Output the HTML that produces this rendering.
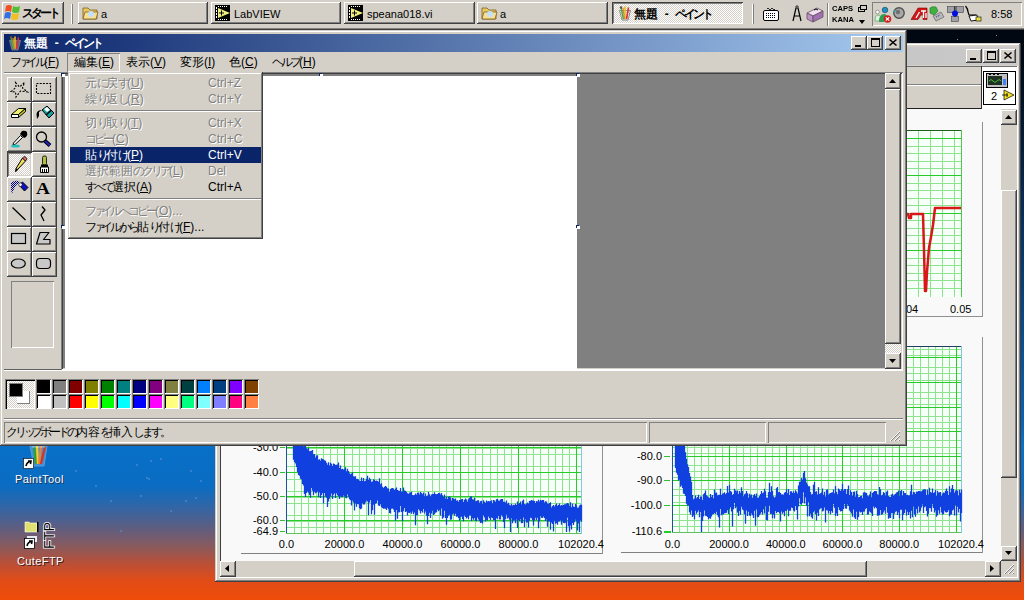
<!DOCTYPE html><html><head><meta charset="utf-8"><style>
*{margin:0;padding:0;box-sizing:border-box}
html,body{width:1024px;height:600px;overflow:hidden}
body{position:relative;font-family:"Liberation Sans",sans-serif;font-size:12px;color:#000;
background:linear-gradient(180deg,#000408 0px,#000a18 60px,#06305e 220px,#0862b4 420px,#0870c8 445px,#0a6cc2 486px,#3066a8 506px,#5a5e84 526px,#885a5e 546px,#b85038 563px,#e04c18 580px,#f04c08 600px)}
div{position:absolute}
.t{white-space:nowrap;line-height:12px}
.btn{background:#d4d0c8;box-shadow:inset -1px -1px #404040,inset 1px 1px #fff,inset -2px -2px #808080,inset 2px 2px #d4d0c8}
.win{background:#d4d0c8;box-shadow:inset -1px -1px #404040,inset 1px 1px #d4d0c8,inset -2px -2px #808080,inset 2px 2px #fff}
.sunk{box-shadow:inset 1px 1px #808080,inset -1px -1px #fff,inset 2px 2px #404040,inset -2px -2px #d4d0c8}
.thin{box-shadow:inset 1px 1px #808080,inset -1px -1px #fff}
.pressed{box-shadow:inset 1px 1px #404040,inset -1px -1px #fff,inset 2px 2px #808080,inset -2px -2px #d4d0c8}
.dith{background:conic-gradient(#fff 25%,#d4d0c8 0 50%,#fff 0 75%,#d4d0c8 0) 0 0/2px 2px}
.u{text-decoration:underline}
.jk,.jn,.js,.jp{display:inline-block;text-align:center;vertical-align:top}
.jk{width:12px}.jn{width:9px}.js{width:7px}.jp{width:8px}
svg{position:absolute;overflow:visible}
</style></head><body><div style="left:996px;top:35px;width:1px;height:1px;background:#8090a8"></div>
<div style="left:957px;top:39px;width:1px;height:1px;background:#8090a8"></div>
<div style="left:150px;top:460px;width:2px;height:2px;background:#4a88d0;opacity:.7"></div>
<div style="left:185px;top:500px;width:2px;height:2px;background:#4a88d0;opacity:.7"></div>
<div style="left:140px;top:495px;width:2px;height:2px;background:#4a88d0;opacity:.7"></div>
<div style="left:95px;top:485px;width:2px;height:2px;background:#4a88d0;opacity:.7"></div>
<div style="left:120px;top:530px;width:2px;height:2px;background:#4a88d0;opacity:.7"></div>
<div style="left:136px;top:464px;width:2px;height:2px;background:#4a88d0;opacity:.7"></div>
<div style="left:146px;top:477px;width:2px;height:2px;background:#4a88d0;opacity:.7"></div>
<div style="left:148px;top:478px;width:2px;height:2px;background:#4a88d0;opacity:.7"></div>
<div style="left:195px;top:497px;width:2px;height:2px;background:#4a88d0;opacity:.7"></div>
<div style="left:160px;top:458px;width:2px;height:2px;background:#4a88d0;opacity:.7"></div>
<div style="left:190px;top:470px;width:2px;height:2px;background:#4a88d0;opacity:.7"></div>
<div style="left:75px;top:470px;width:2px;height:2px;background:#4a88d0;opacity:.7"></div>
<div style="left:110px;top:500px;width:2px;height:2px;background:#4a88d0;opacity:.7"></div>
<div style="left:200px;top:480px;width:2px;height:2px;background:#4a88d0;opacity:.7"></div>
<div style="left:170px;top:510px;width:2px;height:2px;background:#4a88d0;opacity:.7"></div>
<svg style="left:20px;top:444px" width="32" height="26" viewBox="0 0 32 26">
<path d="M10 2 L27 2 L24 22 L14 22 Z" fill="#b0d0f0" opacity=".35" stroke="#e0f0ff" stroke-width="1"/>
<path d="M14 3 L16 20" stroke="#30a030" stroke-width="2.2"/>
<path d="M17 2 L18 20" stroke="#f0d020" stroke-width="2.2"/>
<path d="M21 2 L19 20" stroke="#f08030" stroke-width="2.2"/>
<path d="M25 3 L21 20" stroke="#e03020" stroke-width="2.2"/>
<path d="M12 3 L25 3" stroke="#fff" stroke-width=".8" opacity=".6"/>
<rect x="3.5" y="14.5" width="10" height="10" fill="#fff" stroke="#000" stroke-width=".6"/>
<path d="M6 22 Q7 18 10 17.5 M8 17 L11 17 L10.5 20" stroke="#000" stroke-width="1.6" fill="none"/>
</svg>
<div class="t" style="left:15px;top:473px;color:#fff;font-size:11px;letter-spacing:.4px;text-shadow:1px 1px #203050">PaintTool</div>
<svg style="left:22px;top:518px" width="36" height="34" viewBox="0 0 36 34">
<path d="M3 4 h4 l1 1 h7 v9 h-12 z" fill="#e0e070" stroke="#fff" stroke-width=".6"/>
<rect x="15" y="4" width="1.5" height="10" fill="#000"/>
<rect x="5" y="18" width="10" height="6" fill="#e8e8f0"/>
<rect x="2.5" y="20.5" width="10" height="10" fill="#fff" stroke="#000" stroke-width=".8"/>
<path d="M5 28 Q6 24 9 23.5 M7 23 L10 23 L9.5 26" stroke="#000" stroke-width="1.6" fill="none"/>
<text transform="translate(32 31) rotate(-90)" font-family="Liberation Sans" font-size="15" fill="#000" stroke="#fff" stroke-width="1.6" paint-order="stroke" textLength="27" lengthAdjust="spacingAndGlyphs">FTP</text>
</svg>
<div class="t" style="left:17px;top:555px;color:#fff;font-size:11px;letter-spacing:.4px;text-shadow:1px 1px #402020">CuteFTP</div>
<div class="win" style="left:215px;top:43px;width:806px;height:539px;"></div>
<div style="left:219px;top:47px;width:798px;height:18px;background:linear-gradient(90deg,#808080 0px,#c4c4c4 620px,#cacaca 800px)"></div>
<div class="btn" style="left:966px;top:49px;width:16px;height:14px;"></div>
<div class="btn" style="left:983px;top:49px;width:16px;height:14px;"></div>
<div class="btn" style="left:1000px;top:49px;width:16px;height:14px;"></div>
<div style="left:970px;top:58px;width:6px;height:2px;background:#000"></div>
<div style="left:987px;top:51px;width:9px;height:9px;border:1px solid #000;border-top-width:2px"></div>
<svg style="left:1004px;top:52px" width="8" height="7"><path d="M0.5 0.5 L7.5 6.5 M7.5 0.5 L0.5 6.5" stroke="#000" stroke-width="1.6"/></svg>
<div style="left:219px;top:65px;width:798px;height:20px;background:#d4d0c8"></div>
<div style="left:219px;top:84px;width:765px;height:1px;background:#808080"></div>
<div style="left:219px;top:85px;width:765px;height:1px;background:#fff"></div>
<div style="left:219px;top:108px;width:798px;height:1px;background:#202020"></div>
<div style="left:982px;top:67px;width:35px;height:42px;background:#fff"></div>
<div style="left:219px;top:66px;width:798px;height:1px;background:#707070"></div>
<div style="left:981px;top:66px;width:1px;height:43px;background:#303030"></div>
<div style="left:983px;top:71px;width:33px;height:34px;border:1px solid #000;background:#fff"></div>
<svg style="left:986px;top:73px" width="30" height="30" viewBox="0 0 30 30">
<rect x="0.5" y="0.5" width="21" height="14" fill="#c0c0c0" stroke="#000"/>
<rect x="2" y="3" width="14" height="9" fill="#203020"/>
<path d="M3 8 Q5 5 7 8 T11 8 T15 8" stroke="#40c040" fill="none" stroke-width="1"/>
<rect x="17" y="6" width="3" height="6" fill="#4080ff"/>
<rect x="3" y="1" width="2" height="1" fill="#000"/><rect x="7" y="1" width="2" height="1" fill="#000"/><rect x="11" y="1" width="2" height="1" fill="#000"/>
<text x="5" y="27" font-family="Liberation Sans" font-size="11" fill="#000">2</text>
<path d="M18 17 L28 22 L18 27 Z" fill="#f0e020" stroke="#000" stroke-width=".7"/>
<path d="M16 22 h6 M21 20 v4" stroke="#000" stroke-width=".8"/>
</svg>
<div style="left:220px;top:109px;width:781px;height:452px;background:#f9f9f9;box-shadow:inset 1px 0 #404040"></div>
<div style="left:1001px;top:109px;width:16px;height:452px;background:#d4d0c8"></div>
<div class="btn" style="left:1001px;top:110px;width:16px;height:15px;"></div>
<svg style="left:1005px;top:115px" width="8" height="5"><path d="M0 4 L3.5 0 L7 4 Z" fill="#000"/></svg>
<div class="btn" style="left:1001px;top:190px;width:16px;height:288px;"></div>
<div class="btn" style="left:1001px;top:546px;width:16px;height:15px;"></div>
<svg style="left:1005px;top:551px" width="8" height="5"><path d="M0 0 L7 0 L3.5 4 Z" fill="#000"/></svg>
<div style="left:220px;top:561px;width:781px;height:16px;background:#d4d0c8"></div>
<div class="btn" style="left:220px;top:561px;width:16px;height:16px;"></div>
<svg style="left:225px;top:565px" width="5" height="8"><path d="M4 0 L0 3.5 L4 7 Z" fill="#000"/></svg>
<div class="btn" style="left:354px;top:561px;width:513px;height:16px;"></div>
<div class="btn" style="left:985px;top:561px;width:16px;height:16px;"></div>
<svg style="left:990px;top:565px" width="5" height="8"><path d="M0 0 L4 3.5 L0 7 Z" fill="#000"/></svg>
<div style="left:1001px;top:561px;width:16px;height:16px;background:#d4d0c8"></div>
<div style="left:219px;top:577px;width:799px;height:1px;background:#fff"></div>
<div style="left:1017px;top:66px;width:1px;height:512px;background:#fff"></div>
<svg style="left:1003px;top:563px" width="12" height="12"><path d="M11 1 L1 11 M11 5 L5 11 M11 9 L9 11" stroke="#fff" stroke-width="1"/><path d="M11 2 L2 11 M11 6 L6 11 M11 10 L10 11" stroke="#808080" stroke-width="1"/></svg>
<div style="left:600px;top:122px;width:383px;height:195px;border-right:1px solid #909090;border-bottom:1px solid #909090"></div>
<svg style="left:700px;top:130px" width="262" height="167"><rect x="0" y="0" width="262" height="167" fill="#f6fff8"/><line x1="218.5" y1="0" x2="218.5" y2="167" stroke="#8ee48e" stroke-width="1"/><line x1="230.5" y1="0" x2="230.5" y2="167" stroke="#8ee48e" stroke-width="1"/><line x1="242.5" y1="0" x2="242.5" y2="167" stroke="#8ee48e" stroke-width="1"/><line x1="254.5" y1="0" x2="254.5" y2="167" stroke="#8ee48e" stroke-width="1"/><line x1="0" y1="16.5" x2="262" y2="16.5" stroke="#8ee48e" stroke-width="1"/><line x1="0" y1="23.5" x2="262" y2="23.5" stroke="#8ee48e" stroke-width="1"/><line x1="0" y1="31.5" x2="262" y2="31.5" stroke="#8ee48e" stroke-width="1"/><line x1="0" y1="38.5" x2="262" y2="38.5" stroke="#8ee48e" stroke-width="1"/><line x1="0" y1="53.5" x2="262" y2="53.5" stroke="#8ee48e" stroke-width="1"/><line x1="0" y1="60.5" x2="262" y2="60.5" stroke="#8ee48e" stroke-width="1"/><line x1="0" y1="68.5" x2="262" y2="68.5" stroke="#8ee48e" stroke-width="1"/><line x1="0" y1="75.5" x2="262" y2="75.5" stroke="#8ee48e" stroke-width="1"/><line x1="0" y1="90.5" x2="262" y2="90.5" stroke="#8ee48e" stroke-width="1"/><line x1="0" y1="98.5" x2="262" y2="98.5" stroke="#8ee48e" stroke-width="1"/><line x1="0" y1="105.5" x2="262" y2="105.5" stroke="#8ee48e" stroke-width="1"/><line x1="0" y1="113.5" x2="262" y2="113.5" stroke="#8ee48e" stroke-width="1"/><line x1="0" y1="128.5" x2="262" y2="128.5" stroke="#8ee48e" stroke-width="1"/><line x1="0" y1="135.5" x2="262" y2="135.5" stroke="#8ee48e" stroke-width="1"/><line x1="0" y1="143.5" x2="262" y2="143.5" stroke="#8ee48e" stroke-width="1"/><line x1="0" y1="150.5" x2="262" y2="150.5" stroke="#8ee48e" stroke-width="1"/><line x1="0" y1="158.5" x2="262" y2="158.5" stroke="#8ee48e" stroke-width="1"/><line x1="0" y1="8.5" x2="262" y2="8.5" stroke="#28cc28" stroke-width="1"/><line x1="0" y1="45.5" x2="262" y2="45.5" stroke="#28cc28" stroke-width="1"/><line x1="0" y1="83.5" x2="262" y2="83.5" stroke="#28cc28" stroke-width="1"/><line x1="0" y1="120.5" x2="262" y2="120.5" stroke="#28cc28" stroke-width="1"/></svg>
<div style="left:700px;top:130px;width:262px;height:1px;background:#206020"></div>
<div style="left:961px;top:130px;width:1px;height:167px;background:#50c850"></div>
<svg style="left:0;top:0" width="1024" height="600"><polyline points="905,214 908,214 909,218 911,218 911,214 923,214 924,250 925,291 926,291 927,272 929,248 931,237 933,225 935,208 961,208" fill="none" stroke="#d81818" stroke-width="2.5" stroke-linejoin="round"/></svg>
<div class="t" style="left:906px;top:303px;font-size:11px">04</div>
<div class="t" style="left:950px;top:303px;font-size:11px">0.05</div>
<div style="left:241px;top:553px;width:362px;height:1px;background:#808080"></div>
<div style="left:602px;top:122px;width:1px;height:432px;background:#909090"></div>
<svg style="left:286px;top:130px" width="296" height="403"><rect x="0" y="0" width="296" height="403" fill="#f6fff8"/><line x1="8.5" y1="0" x2="8.5" y2="403" stroke="#8ee48e" stroke-width="1"/><line x1="15.5" y1="0" x2="15.5" y2="403" stroke="#8ee48e" stroke-width="1"/><line x1="22.5" y1="0" x2="22.5" y2="403" stroke="#8ee48e" stroke-width="1"/><line x1="30.5" y1="0" x2="30.5" y2="403" stroke="#8ee48e" stroke-width="1"/><line x1="37.5" y1="0" x2="37.5" y2="403" stroke="#8ee48e" stroke-width="1"/><line x1="44.5" y1="0" x2="44.5" y2="403" stroke="#8ee48e" stroke-width="1"/><line x1="51.5" y1="0" x2="51.5" y2="403" stroke="#8ee48e" stroke-width="1"/><line x1="66.5" y1="0" x2="66.5" y2="403" stroke="#8ee48e" stroke-width="1"/><line x1="73.5" y1="0" x2="73.5" y2="403" stroke="#8ee48e" stroke-width="1"/><line x1="80.5" y1="0" x2="80.5" y2="403" stroke="#8ee48e" stroke-width="1"/><line x1="88.5" y1="0" x2="88.5" y2="403" stroke="#8ee48e" stroke-width="1"/><line x1="95.5" y1="0" x2="95.5" y2="403" stroke="#8ee48e" stroke-width="1"/><line x1="102.5" y1="0" x2="102.5" y2="403" stroke="#8ee48e" stroke-width="1"/><line x1="109.5" y1="0" x2="109.5" y2="403" stroke="#8ee48e" stroke-width="1"/><line x1="124.5" y1="0" x2="124.5" y2="403" stroke="#8ee48e" stroke-width="1"/><line x1="131.5" y1="0" x2="131.5" y2="403" stroke="#8ee48e" stroke-width="1"/><line x1="138.5" y1="0" x2="138.5" y2="403" stroke="#8ee48e" stroke-width="1"/><line x1="146.5" y1="0" x2="146.5" y2="403" stroke="#8ee48e" stroke-width="1"/><line x1="153.5" y1="0" x2="153.5" y2="403" stroke="#8ee48e" stroke-width="1"/><line x1="160.5" y1="0" x2="160.5" y2="403" stroke="#8ee48e" stroke-width="1"/><line x1="167.5" y1="0" x2="167.5" y2="403" stroke="#8ee48e" stroke-width="1"/><line x1="182.5" y1="0" x2="182.5" y2="403" stroke="#8ee48e" stroke-width="1"/><line x1="189.5" y1="0" x2="189.5" y2="403" stroke="#8ee48e" stroke-width="1"/><line x1="196.5" y1="0" x2="196.5" y2="403" stroke="#8ee48e" stroke-width="1"/><line x1="204.5" y1="0" x2="204.5" y2="403" stroke="#8ee48e" stroke-width="1"/><line x1="211.5" y1="0" x2="211.5" y2="403" stroke="#8ee48e" stroke-width="1"/><line x1="218.5" y1="0" x2="218.5" y2="403" stroke="#8ee48e" stroke-width="1"/><line x1="225.5" y1="0" x2="225.5" y2="403" stroke="#8ee48e" stroke-width="1"/><line x1="240.5" y1="0" x2="240.5" y2="403" stroke="#8ee48e" stroke-width="1"/><line x1="247.5" y1="0" x2="247.5" y2="403" stroke="#8ee48e" stroke-width="1"/><line x1="254.5" y1="0" x2="254.5" y2="403" stroke="#8ee48e" stroke-width="1"/><line x1="262.5" y1="0" x2="262.5" y2="403" stroke="#8ee48e" stroke-width="1"/><line x1="269.5" y1="0" x2="269.5" y2="403" stroke="#8ee48e" stroke-width="1"/><line x1="276.5" y1="0" x2="276.5" y2="403" stroke="#8ee48e" stroke-width="1"/><line x1="283.5" y1="0" x2="283.5" y2="403" stroke="#8ee48e" stroke-width="1"/><line x1="0" y1="397.5" x2="296" y2="397.5" stroke="#8ee48e" stroke-width="1"/><line x1="0" y1="391.5" x2="296" y2="391.5" stroke="#8ee48e" stroke-width="1"/><line x1="0" y1="385.5" x2="296" y2="385.5" stroke="#8ee48e" stroke-width="1"/><line x1="0" y1="373.5" x2="296" y2="373.5" stroke="#8ee48e" stroke-width="1"/><line x1="0" y1="367.5" x2="296" y2="367.5" stroke="#8ee48e" stroke-width="1"/><line x1="0" y1="361.5" x2="296" y2="361.5" stroke="#8ee48e" stroke-width="1"/><line x1="0" y1="349.5" x2="296" y2="349.5" stroke="#8ee48e" stroke-width="1"/><line x1="0" y1="342.5" x2="296" y2="342.5" stroke="#8ee48e" stroke-width="1"/><line x1="0" y1="336.5" x2="296" y2="336.5" stroke="#8ee48e" stroke-width="1"/><line x1="0" y1="324.5" x2="296" y2="324.5" stroke="#8ee48e" stroke-width="1"/><line x1="0" y1="318.5" x2="296" y2="318.5" stroke="#8ee48e" stroke-width="1"/><line x1="0" y1="312.5" x2="296" y2="312.5" stroke="#8ee48e" stroke-width="1"/><line x1="0" y1="300.5" x2="296" y2="300.5" stroke="#8ee48e" stroke-width="1"/><line x1="0" y1="294.5" x2="296" y2="294.5" stroke="#8ee48e" stroke-width="1"/><line x1="0" y1="288.5" x2="296" y2="288.5" stroke="#8ee48e" stroke-width="1"/><line x1="0" y1="276.5" x2="296" y2="276.5" stroke="#8ee48e" stroke-width="1"/><line x1="0" y1="270.5" x2="296" y2="270.5" stroke="#8ee48e" stroke-width="1"/><line x1="0" y1="264.5" x2="296" y2="264.5" stroke="#8ee48e" stroke-width="1"/><line x1="0" y1="252.5" x2="296" y2="252.5" stroke="#8ee48e" stroke-width="1"/><line x1="0" y1="246.5" x2="296" y2="246.5" stroke="#8ee48e" stroke-width="1"/><line x1="0" y1="240.5" x2="296" y2="240.5" stroke="#8ee48e" stroke-width="1"/><line x1="0" y1="228.5" x2="296" y2="228.5" stroke="#8ee48e" stroke-width="1"/><line x1="0" y1="222.5" x2="296" y2="222.5" stroke="#8ee48e" stroke-width="1"/><line x1="0" y1="215.5" x2="296" y2="215.5" stroke="#8ee48e" stroke-width="1"/><line x1="0" y1="203.5" x2="296" y2="203.5" stroke="#8ee48e" stroke-width="1"/><line x1="0" y1="197.5" x2="296" y2="197.5" stroke="#8ee48e" stroke-width="1"/><line x1="0" y1="191.5" x2="296" y2="191.5" stroke="#8ee48e" stroke-width="1"/><line x1="0" y1="179.5" x2="296" y2="179.5" stroke="#8ee48e" stroke-width="1"/><line x1="0" y1="173.5" x2="296" y2="173.5" stroke="#8ee48e" stroke-width="1"/><line x1="0" y1="167.5" x2="296" y2="167.5" stroke="#8ee48e" stroke-width="1"/><line x1="58.5" y1="0" x2="58.5" y2="403" stroke="#28cc28" stroke-width="1"/><line x1="116.5" y1="0" x2="116.5" y2="403" stroke="#28cc28" stroke-width="1"/><line x1="174.5" y1="0" x2="174.5" y2="403" stroke="#28cc28" stroke-width="1"/><line x1="232.5" y1="0" x2="232.5" y2="403" stroke="#28cc28" stroke-width="1"/><line x1="290.5" y1="0" x2="290.5" y2="403" stroke="#28cc28" stroke-width="1"/><line x1="0" y1="342.5" x2="296" y2="342.5" stroke="#28cc28" stroke-width="1"/><line x1="0" y1="366.5" x2="296" y2="366.5" stroke="#28cc28" stroke-width="1"/><line x1="0" y1="390.5" x2="296" y2="390.5" stroke="#28cc28" stroke-width="1"/><line x1="0" y1="317.5" x2="296" y2="317.5" stroke="#28cc28" stroke-width="1"/></svg>
<div style="left:286px;top:130px;width:1px;height:404px;background:#2050a0"></div>
<div style="left:286px;top:533px;width:296px;height:1px;background:#60c060"></div>
<div style="left:581px;top:130px;width:1px;height:404px;background:#80c8e0"></div>
<div class="t" style="left:230px;top:441px;width:48px;text-align:right;font-size:11px">-30.0</div>
<div style="left:280px;top:447px;width:5px;height:1px;background:#30c030"></div>
<div class="t" style="left:230px;top:466px;width:48px;text-align:right;font-size:11px">-40.0</div>
<div style="left:280px;top:472px;width:5px;height:1px;background:#30c030"></div>
<div class="t" style="left:230px;top:490px;width:48px;text-align:right;font-size:11px">-50.0</div>
<div style="left:280px;top:496px;width:5px;height:1px;background:#30c030"></div>
<div class="t" style="left:230px;top:514px;width:48px;text-align:right;font-size:11px">-60.0</div>
<div style="left:280px;top:520px;width:5px;height:1px;background:#30c030"></div>
<div class="t" style="left:230px;top:525px;width:48px;text-align:right;font-size:11px">-64.9</div>
<div style="left:280px;top:531px;width:5px;height:1px;background:#30c030"></div>
<div class="t" style="left:246.5px;top:538px;width:80px;text-align:center;font-size:11px">0.0</div>
<div class="t" style="left:304.5px;top:538px;width:80px;text-align:center;font-size:11px">20000.0</div>
<div class="t" style="left:362.5px;top:538px;width:80px;text-align:center;font-size:11px">40000.0</div>
<div class="t" style="left:420.5px;top:538px;width:80px;text-align:center;font-size:11px">60000.0</div>
<div class="t" style="left:478.5px;top:538px;width:80px;text-align:center;font-size:11px">80000.0</div>
<div class="t" style="left:541px;top:538px;width:80px;text-align:center;font-size:11px">102020.4</div>
<svg style="left:0;top:0" width="1024" height="600"><path d="M288.5 440.0V440.0M289.5 440.0V440.0M290.5 440.0V440.0M291.5 440.0V440.0M292.5 440.0V440.0M293.5 440.0V459.8M294.5 440.0V461.9M295.5 440.0V463.4M296.5 440.0V466.9M297.5 440.0V471.9M298.5 441.6V475.1M299.5 441.9V475.8M300.5 444.1V478.7M301.5 444.3V479.4M302.5 444.5V483.9M303.5 446.3V485.5M304.5 445.8V494.1M305.5 446.0V496.9M306.5 448.3V493.0M307.5 449.2V491.6M308.5 448.0V492.7M309.5 451.2V494.9M310.5 451.0V497.8M311.5 450.8V487.9M312.5 449.9V490.7M313.5 454.2V495.3M314.5 453.9V491.7M315.5 457.5V493.2M316.5 455.4V492.7M317.5 455.2V491.6M318.5 459.7V497.3M319.5 459.2V492.6M320.5 460.7V498.1M321.5 458.2V495.1M322.5 459.1V493.0M323.5 459.5V503.6M324.5 460.3V492.9M325.5 460.8V496.6M326.5 462.8V497.8M327.5 464.8V507.1M328.5 462.3V501.5M329.5 465.4V498.8M330.5 462.8V496.4M331.5 463.7V493.6M332.5 466.0V499.1M333.5 463.6V494.8M334.5 464.1V493.3M335.5 465.0V497.9M336.5 464.8V493.2M337.5 464.4V494.9M338.5 462.6V496.3M339.5 468.1V499.0M340.5 465.6V496.3M341.5 469.3V497.3M342.5 468.7V497.0M343.5 469.5V495.5M344.5 469.3V496.4M345.5 467.2V497.7M346.5 471.3V498.3M347.5 468.8V494.5M348.5 471.1V496.7M349.5 473.3V499.2M350.5 474.2V500.3M351.5 473.6V505.4M352.5 472.4V500.4M353.5 476.2V502.5M354.5 476.4V510.6M355.5 476.2V503.4M356.5 479.0V506.8M357.5 478.8V504.1M358.5 479.4V504.2M359.5 480.8V508.3M360.5 481.1V509.2M361.5 477.6V508.6M362.5 480.9V503.2M363.5 477.9V504.4M364.5 481.2V504.6M365.5 480.7V502.5M366.5 478.8V500.6M367.5 475.8V501.4M368.5 480.0V515.3M369.5 477.8V502.6M370.5 479.2V500.1M371.5 481.7V514.3M372.5 481.6V510.2M373.5 479.3V504.7M374.5 479.7V514.8M375.5 481.0V503.8M376.5 480.4V503.0M377.5 480.9V500.4M378.5 481.8V505.5M379.5 478.3V506.1M380.5 484.2V504.3M381.5 483.2V506.9M382.5 486.8V507.9M383.5 488.1V508.8M384.5 486.8V508.4M385.5 485.9V508.8M386.5 486.7V510.0M387.5 488.2V507.8M388.5 488.4V509.2M389.5 491.7V513.0M390.5 488.9V513.6M391.5 488.3V508.7M392.5 487.9V508.4M393.5 488.4V509.6M394.5 490.1V512.0M395.5 488.7V520.8M396.5 487.5V509.9M397.5 490.1V518.7M398.5 490.5V512.6M399.5 491.0V512.3M400.5 488.0V505.9M401.5 491.6V512.1M402.5 491.4V521.0M403.5 487.5V511.3M404.5 490.6V507.9M405.5 490.8V512.1M406.5 491.9V511.6M407.5 493.3V515.6M408.5 493.9V512.7M409.5 492.5V513.1M410.5 492.6V512.2M411.5 491.8V513.7M412.5 495.1V511.6M413.5 495.2V514.2M414.5 495.1V512.6M415.5 493.4V525.2M416.5 494.8V515.2M417.5 493.1V515.3M418.5 492.4V509.3M419.5 494.6V510.6M420.5 491.9V513.5M421.5 492.9V511.1M422.5 494.3V512.4M423.5 492.4V508.9M424.5 496.2V513.6M425.5 493.5V511.6M426.5 496.3V515.8M427.5 495.4V524.3M428.5 491.9V516.1M429.5 494.2V512.7M430.5 496.5V518.0M431.5 494.6V513.5M432.5 493.9V510.7M433.5 494.0V515.0M434.5 492.3V514.3M435.5 493.9V512.7M436.5 494.3V512.2M437.5 493.9V509.6M438.5 492.9V511.3M439.5 493.1V510.0M440.5 494.4V515.4M441.5 493.1V508.5M442.5 495.3V518.7M443.5 497.1V517.4M444.5 494.6V510.8M445.5 498.4V517.9M446.5 496.8V524.7M447.5 499.1V518.1M448.5 496.8V515.7M449.5 496.5V514.7M450.5 497.4V519.7M451.5 500.6V519.5M452.5 497.9V514.4M453.5 498.5V513.6M454.5 499.2V515.7M455.5 498.6V513.8M456.5 500.7V516.8M457.5 500.2V516.4M458.5 501.7V518.0M459.5 499.9V520.4M460.5 499.7V517.0M461.5 499.2V516.4M462.5 499.1V518.9M463.5 502.0V521.2M464.5 499.7V515.5M465.5 498.4V517.1M466.5 499.4V518.5M467.5 501.8V517.3M468.5 499.3V518.9M469.5 498.0V515.5M470.5 496.5V515.4M471.5 496.6V520.9M472.5 499.2V518.3M473.5 499.5V519.8M474.5 497.7V518.0M475.5 501.3V520.9M476.5 500.9V521.2M477.5 500.2V517.4M478.5 500.2V519.5M479.5 502.7V520.9M480.5 501.3V522.9M481.5 500.8V522.4M482.5 503.8V523.6M483.5 500.3V515.3M484.5 501.7V517.6M485.5 502.7V521.6M486.5 500.5V520.0M487.5 501.5V520.4M488.5 501.0V516.4M489.5 501.4V518.2M490.5 501.0V520.3M491.5 500.3V517.5M492.5 503.2V517.9M493.5 500.0V520.3M494.5 500.5V520.1M495.5 501.8V529.0M496.5 499.3V518.3M497.5 498.9V518.8M498.5 500.5V516.0M499.5 500.7V519.5M500.5 499.4V519.5M501.5 499.0V515.1M502.5 499.1V516.8M503.5 501.8V522.1M504.5 501.7V528.1M505.5 502.5V519.3M506.5 500.4V514.8M507.5 503.8V518.6M508.5 502.7V517.8M509.5 504.8V519.7M510.5 505.4V532.0M511.5 503.7V518.3M512.5 505.4V523.3M513.5 504.8V520.4M514.5 505.0V520.3M515.5 503.7V523.2M516.5 505.1V519.6M517.5 501.6V528.1M518.5 503.9V520.0M519.5 503.1V521.3M520.5 501.4V519.3M521.5 504.3V523.2M522.5 500.8V523.0M523.5 499.4V517.5M524.5 504.0V527.3M525.5 504.5V519.6M526.5 503.5V522.6M527.5 502.4V522.4M528.5 503.5V527.5M529.5 500.9V520.4M530.5 500.7V517.8M531.5 500.1V518.2M532.5 500.5V520.3M533.5 500.4V525.6M534.5 501.0V520.4M535.5 503.0V517.8M536.5 500.9V519.9M537.5 501.5V517.8M538.5 499.8V528.2M539.5 501.5V521.6M540.5 500.1V516.0M541.5 500.4V517.7M542.5 500.0V518.1M543.5 500.1V516.4M544.5 502.5V517.9M545.5 501.2V521.0M546.5 501.6V519.6M547.5 503.4V526.8M548.5 503.7V521.7M549.5 503.1V521.3M550.5 502.2V529.8M551.5 507.6V522.6M552.5 505.9V523.9M553.5 504.9V531.5M554.5 506.4V520.5M555.5 505.1V523.7M556.5 503.5V523.0M557.5 505.7V524.8M558.5 504.9V521.6M559.5 503.5V521.5M560.5 505.8V520.0M561.5 505.0V524.8M562.5 505.5V521.6M563.5 504.7V522.9M564.5 504.2V523.3M565.5 504.3V522.7M566.5 503.5V532.0M567.5 503.0V517.7M568.5 503.6V526.2M569.5 506.0V531.6M570.5 502.3V525.6M571.5 507.2V529.4M572.5 503.8V523.0M573.5 506.6V525.0M574.5 506.9V522.2M575.5 504.1V519.7M576.5 505.6V521.6M577.5 507.7V530.4M578.5 507.5V523.6M579.5 505.4V532.0M580.5 504.6V519.9M581.5 504.7V521.7" stroke="#1040e0" stroke-width="1.3" fill="none"/></svg>
<div style="left:621px;top:552px;width:362px;height:1px;background:#808080"></div>
<div style="left:982px;top:337px;width:1px;height:216px;background:#909090"></div>
<svg style="left:672px;top:346px" width="290" height="186"><rect x="0" y="0" width="290" height="186" fill="#f6fff8"/><line x1="7.5" y1="0" x2="7.5" y2="186" stroke="#8ee48e" stroke-width="1"/><line x1="15.5" y1="0" x2="15.5" y2="186" stroke="#8ee48e" stroke-width="1"/><line x1="22.5" y1="0" x2="22.5" y2="186" stroke="#8ee48e" stroke-width="1"/><line x1="29.5" y1="0" x2="29.5" y2="186" stroke="#8ee48e" stroke-width="1"/><line x1="36.5" y1="0" x2="36.5" y2="186" stroke="#8ee48e" stroke-width="1"/><line x1="43.5" y1="0" x2="43.5" y2="186" stroke="#8ee48e" stroke-width="1"/><line x1="50.5" y1="0" x2="50.5" y2="186" stroke="#8ee48e" stroke-width="1"/><line x1="64.5" y1="0" x2="64.5" y2="186" stroke="#8ee48e" stroke-width="1"/><line x1="71.5" y1="0" x2="71.5" y2="186" stroke="#8ee48e" stroke-width="1"/><line x1="78.5" y1="0" x2="78.5" y2="186" stroke="#8ee48e" stroke-width="1"/><line x1="85.5" y1="0" x2="85.5" y2="186" stroke="#8ee48e" stroke-width="1"/><line x1="93.5" y1="0" x2="93.5" y2="186" stroke="#8ee48e" stroke-width="1"/><line x1="100.5" y1="0" x2="100.5" y2="186" stroke="#8ee48e" stroke-width="1"/><line x1="107.5" y1="0" x2="107.5" y2="186" stroke="#8ee48e" stroke-width="1"/><line x1="121.5" y1="0" x2="121.5" y2="186" stroke="#8ee48e" stroke-width="1"/><line x1="128.5" y1="0" x2="128.5" y2="186" stroke="#8ee48e" stroke-width="1"/><line x1="135.5" y1="0" x2="135.5" y2="186" stroke="#8ee48e" stroke-width="1"/><line x1="142.5" y1="0" x2="142.5" y2="186" stroke="#8ee48e" stroke-width="1"/><line x1="149.5" y1="0" x2="149.5" y2="186" stroke="#8ee48e" stroke-width="1"/><line x1="156.5" y1="0" x2="156.5" y2="186" stroke="#8ee48e" stroke-width="1"/><line x1="163.5" y1="0" x2="163.5" y2="186" stroke="#8ee48e" stroke-width="1"/><line x1="178.5" y1="0" x2="178.5" y2="186" stroke="#8ee48e" stroke-width="1"/><line x1="185.5" y1="0" x2="185.5" y2="186" stroke="#8ee48e" stroke-width="1"/><line x1="192.5" y1="0" x2="192.5" y2="186" stroke="#8ee48e" stroke-width="1"/><line x1="199.5" y1="0" x2="199.5" y2="186" stroke="#8ee48e" stroke-width="1"/><line x1="206.5" y1="0" x2="206.5" y2="186" stroke="#8ee48e" stroke-width="1"/><line x1="213.5" y1="0" x2="213.5" y2="186" stroke="#8ee48e" stroke-width="1"/><line x1="220.5" y1="0" x2="220.5" y2="186" stroke="#8ee48e" stroke-width="1"/><line x1="234.5" y1="0" x2="234.5" y2="186" stroke="#8ee48e" stroke-width="1"/><line x1="241.5" y1="0" x2="241.5" y2="186" stroke="#8ee48e" stroke-width="1"/><line x1="248.5" y1="0" x2="248.5" y2="186" stroke="#8ee48e" stroke-width="1"/><line x1="256.5" y1="0" x2="256.5" y2="186" stroke="#8ee48e" stroke-width="1"/><line x1="263.5" y1="0" x2="263.5" y2="186" stroke="#8ee48e" stroke-width="1"/><line x1="270.5" y1="0" x2="270.5" y2="186" stroke="#8ee48e" stroke-width="1"/><line x1="277.5" y1="0" x2="277.5" y2="186" stroke="#8ee48e" stroke-width="1"/><line x1="0" y1="180.5" x2="290" y2="180.5" stroke="#8ee48e" stroke-width="1"/><line x1="0" y1="174.5" x2="290" y2="174.5" stroke="#8ee48e" stroke-width="1"/><line x1="0" y1="168.5" x2="290" y2="168.5" stroke="#8ee48e" stroke-width="1"/><line x1="0" y1="156.5" x2="290" y2="156.5" stroke="#8ee48e" stroke-width="1"/><line x1="0" y1="149.5" x2="290" y2="149.5" stroke="#8ee48e" stroke-width="1"/><line x1="0" y1="143.5" x2="290" y2="143.5" stroke="#8ee48e" stroke-width="1"/><line x1="0" y1="131.5" x2="290" y2="131.5" stroke="#8ee48e" stroke-width="1"/><line x1="0" y1="125.5" x2="290" y2="125.5" stroke="#8ee48e" stroke-width="1"/><line x1="0" y1="119.5" x2="290" y2="119.5" stroke="#8ee48e" stroke-width="1"/><line x1="0" y1="107.5" x2="290" y2="107.5" stroke="#8ee48e" stroke-width="1"/><line x1="0" y1="101.5" x2="290" y2="101.5" stroke="#8ee48e" stroke-width="1"/><line x1="0" y1="94.5" x2="290" y2="94.5" stroke="#8ee48e" stroke-width="1"/><line x1="0" y1="82.5" x2="290" y2="82.5" stroke="#8ee48e" stroke-width="1"/><line x1="0" y1="76.5" x2="290" y2="76.5" stroke="#8ee48e" stroke-width="1"/><line x1="0" y1="70.5" x2="290" y2="70.5" stroke="#8ee48e" stroke-width="1"/><line x1="0" y1="58.5" x2="290" y2="58.5" stroke="#8ee48e" stroke-width="1"/><line x1="0" y1="52.5" x2="290" y2="52.5" stroke="#8ee48e" stroke-width="1"/><line x1="0" y1="46.5" x2="290" y2="46.5" stroke="#8ee48e" stroke-width="1"/><line x1="0" y1="34.5" x2="290" y2="34.5" stroke="#8ee48e" stroke-width="1"/><line x1="0" y1="27.5" x2="290" y2="27.5" stroke="#8ee48e" stroke-width="1"/><line x1="0" y1="21.5" x2="290" y2="21.5" stroke="#8ee48e" stroke-width="1"/><line x1="0" y1="9.5" x2="290" y2="9.5" stroke="#8ee48e" stroke-width="1"/><line x1="0" y1="3.5" x2="290" y2="3.5" stroke="#8ee48e" stroke-width="1"/><line x1="57.5" y1="0" x2="57.5" y2="186" stroke="#28cc28" stroke-width="1"/><line x1="114.5" y1="0" x2="114.5" y2="186" stroke="#28cc28" stroke-width="1"/><line x1="170.5" y1="0" x2="170.5" y2="186" stroke="#28cc28" stroke-width="1"/><line x1="227.5" y1="0" x2="227.5" y2="186" stroke="#28cc28" stroke-width="1"/><line x1="284.5" y1="0" x2="284.5" y2="186" stroke="#28cc28" stroke-width="1"/><line x1="0" y1="110.5" x2="290" y2="110.5" stroke="#28cc28" stroke-width="1"/><line x1="0" y1="134.5" x2="290" y2="134.5" stroke="#28cc28" stroke-width="1"/><line x1="0" y1="159.5" x2="290" y2="159.5" stroke="#28cc28" stroke-width="1"/><line x1="0" y1="36.5" x2="290" y2="36.5" stroke="#28cc28" stroke-width="1"/><line x1="0" y1="11.5" x2="290" y2="11.5" stroke="#28cc28" stroke-width="1"/><line x1="0" y1="85.5" x2="290" y2="85.5" stroke="#28cc28" stroke-width="1"/><line x1="0" y1="61.5" x2="290" y2="61.5" stroke="#28cc28" stroke-width="1"/></svg>
<div style="left:672px;top:346px;width:290px;height:1px;background:#204060"></div>
<div style="left:672px;top:346px;width:1px;height:187px;background:#2050a0"></div>
<div style="left:672px;top:532px;width:290px;height:1px;background:#60c060"></div>
<div style="left:961px;top:346px;width:1px;height:187px;background:#80c8e0"></div>
<div class="t" style="left:614px;top:450px;width:48px;text-align:right;font-size:11px">-80.0</div>
<div style="left:664px;top:456px;width:6px;height:1px;background:#30c030"></div>
<div class="t" style="left:614px;top:474px;width:48px;text-align:right;font-size:11px">-90.0</div>
<div style="left:664px;top:480px;width:6px;height:1px;background:#30c030"></div>
<div class="t" style="left:614px;top:499px;width:48px;text-align:right;font-size:11px">-100.0</div>
<div style="left:664px;top:505px;width:6px;height:1px;background:#30c030"></div>
<div class="t" style="left:614px;top:525px;width:48px;text-align:right;font-size:11px">-110.6</div>
<div style="left:664px;top:531px;width:6px;height:1px;background:#30c030"></div>
<div style="left:664px;top:531px;width:7px;height:2px;background:#20d020"></div>
<div class="t" style="left:632.4px;top:538px;width:80px;text-align:center;font-size:11px">0.0</div>
<div class="t" style="left:689.1px;top:538px;width:80px;text-align:center;font-size:11px">20000.0</div>
<div class="t" style="left:745.8px;top:538px;width:80px;text-align:center;font-size:11px">40000.0</div>
<div class="t" style="left:802.5px;top:538px;width:80px;text-align:center;font-size:11px">60000.0</div>
<div class="t" style="left:859.2px;top:538px;width:80px;text-align:center;font-size:11px">80000.0</div>
<div class="t" style="left:921px;top:538px;width:80px;text-align:center;font-size:11px">102020.4</div>
<svg style="left:0;top:0" width="1024" height="600"><path d="M674.5 440.0V440.0M675.5 440.0V468.1M676.5 440.0V472.8M677.5 440.0V474.7M678.5 440.0V480.4M679.5 440.0V479.8M680.5 440.0V486.7M681.5 440.0V485.5M682.5 440.0V487.9M683.5 440.0V493.6M684.5 446.0V494.0M685.5 452.3V496.0M686.5 458.7V503.8M687.5 464.2V505.4M688.5 467.1V505.6M689.5 472.9V512.3M690.5 476.5V514.5M691.5 481.7V510.6M692.5 495.0V517.1M693.5 499.3V515.4M694.5 498.4V519.2M695.5 495.4V510.8M696.5 498.2V513.8M697.5 497.1V512.2M698.5 494.7V510.4M699.5 498.9V517.3M700.5 496.6V512.1M701.5 496.4V531.9M702.5 499.9V521.0M703.5 494.2V516.4M704.5 492.9V510.5M705.5 490.6V515.8M706.5 495.3V515.9M707.5 496.3V517.1M708.5 497.2V519.2M709.5 498.0V518.1M710.5 494.1V518.8M711.5 496.8V516.5M712.5 494.9V514.5M713.5 498.2V513.9M714.5 489.6V512.9M715.5 492.9V514.0M716.5 492.6V511.7M717.5 495.5V515.2M718.5 494.8V517.3M719.5 494.7V527.4M720.5 488.7V508.9M721.5 495.0V515.3M722.5 493.7V514.4M723.5 493.3V514.5M724.5 492.3V513.3M725.5 494.3V513.3M726.5 493.1V512.8M727.5 486.0V510.2M728.5 492.4V514.0M729.5 484.8V509.1M730.5 491.1V507.3M731.5 491.8V511.5M732.5 494.9V526.5M733.5 494.0V509.3M734.5 488.8V502.9M735.5 490.6V508.3M736.5 491.5V506.8M737.5 490.4V512.4M738.5 494.0V516.1M739.5 490.9V511.1M740.5 492.8V514.7M741.5 487.3V506.8M742.5 491.0V509.5M743.5 496.2V510.3M744.5 494.3V514.3M745.5 493.5V523.8M746.5 491.0V510.4M747.5 493.3V516.1M748.5 497.4V511.7M749.5 493.7V515.4M750.5 495.2V516.1M751.5 494.6V513.6M752.5 497.7V515.3M753.5 495.3V518.1M754.5 493.9V510.8M755.5 495.9V525.7M756.5 493.5V509.6M757.5 497.7V517.2M758.5 497.5V517.0M759.5 495.9V515.3M760.5 493.9V513.7M761.5 491.0V512.0M762.5 493.2V514.6M763.5 492.6V509.3M764.5 488.8V513.6M765.5 491.2V506.3M766.5 497.5V520.1M767.5 497.7V520.5M768.5 492.0V511.8M769.5 482.8V505.5M770.5 492.1V514.1M771.5 486.3V513.8M772.5 491.0V518.3M773.5 496.3V514.4M774.5 497.8V518.4M775.5 496.4V511.1M776.5 488.2V513.3M777.5 486.9V512.0M778.5 492.3V512.1M779.5 492.1V513.2M780.5 493.1V521.4M781.5 494.6V511.6M782.5 494.3V513.7M783.5 494.8V512.2M784.5 492.7V516.3M785.5 491.9V511.1M786.5 489.3V510.8M787.5 493.2V509.6M788.5 489.1V516.3M789.5 495.0V510.8M790.5 491.2V510.7M791.5 491.2V507.5M792.5 493.1V507.9M793.5 491.3V510.6M794.5 493.1V511.4M795.5 490.2V506.1M796.5 491.6V510.0M797.5 493.5V519.4M798.5 485.5V506.4M799.5 481.7V498.3M800.5 481.7V504.1M801.5 478.1V504.8M802.5 479.6V503.1M803.5 472.7V492.3M804.5 470.9V503.6M805.5 478.2V497.4M806.5 482.5V505.6M807.5 484.6V516.6M808.5 486.3V502.1M809.5 486.2V516.3M810.5 492.1V513.7M811.5 494.6V517.3M812.5 494.0V518.8M813.5 484.8V512.2M814.5 481.9V510.7M815.5 491.7V514.2M816.5 491.2V520.4M817.5 494.6V512.7M818.5 487.2V515.9M819.5 494.1V509.4M820.5 493.2V508.6M821.5 492.6V508.1M822.5 488.6V511.6M823.5 494.8V510.7M824.5 491.7V507.5M825.5 496.6V522.4M826.5 489.8V510.3M827.5 489.3V510.6M828.5 494.8V513.5M829.5 493.5V511.1M830.5 493.1V514.3M831.5 492.5V511.0M832.5 492.3V512.7M833.5 489.6V504.1M834.5 493.3V507.8M835.5 486.0V516.0M836.5 491.7V513.6M837.5 494.3V516.0M838.5 488.6V507.3M839.5 489.5V509.9M840.5 491.0V511.4M841.5 489.2V511.1M842.5 483.8V511.2M843.5 490.5V509.1M844.5 489.1V504.0M845.5 489.1V508.5M846.5 493.9V508.8M847.5 489.3V504.4M848.5 485.6V506.1M849.5 495.1V510.4M850.5 490.2V511.7M851.5 492.0V513.6M852.5 495.7V516.7M853.5 491.7V509.6M854.5 491.4V517.4M855.5 496.6V519.0M856.5 490.7V511.8M857.5 493.9V519.7M858.5 497.2V516.9M859.5 497.1V511.4M860.5 495.9V512.4M861.5 495.8V512.0M862.5 498.3V514.9M863.5 492.4V511.8M864.5 492.3V511.6M865.5 492.4V509.0M866.5 493.1V507.9M867.5 495.6V514.8M868.5 496.3V514.4M869.5 494.5V511.3M870.5 491.6V512.2M871.5 497.2V513.3M872.5 493.1V515.9M873.5 491.9V506.5M874.5 491.0V508.5M875.5 491.1V507.1M876.5 491.2V508.2M877.5 494.2V515.8M878.5 494.8V515.5M879.5 487.0V515.2M880.5 489.2V510.0M881.5 495.6V514.8M882.5 494.7V514.2M883.5 492.1V512.6M884.5 493.0V510.5M885.5 495.4V513.8M886.5 491.8V507.1M887.5 490.5V512.8M888.5 496.0V518.7M889.5 496.8V517.7M890.5 497.1V518.1M891.5 494.6V513.2M892.5 493.7V513.0M893.5 495.7V518.9M894.5 494.6V513.8M895.5 493.8V511.8M896.5 492.5V511.3M897.5 492.1V514.9M898.5 490.4V512.4M899.5 496.3V518.3M900.5 491.1V509.7M901.5 490.1V509.8M902.5 495.5V520.2M903.5 490.9V514.8M904.5 493.0V513.1M905.5 493.0V509.4M906.5 494.9V515.5M907.5 494.8V511.8M908.5 495.4V515.0M909.5 495.3V512.2M910.5 491.3V518.5M911.5 484.7V510.8M912.5 494.5V517.2M913.5 492.0V506.4M914.5 492.3V514.4M915.5 494.1V516.7M916.5 491.4V508.9M917.5 491.7V513.5M918.5 491.0V506.6M919.5 491.1V512.5M920.5 491.6V510.7M921.5 491.2V507.4M922.5 490.2V504.5M923.5 489.5V513.1M924.5 489.3V507.3M925.5 489.5V506.6M926.5 495.0V510.9M927.5 489.8V516.4M928.5 494.5V513.8M929.5 487.8V508.3M930.5 491.9V508.3M931.5 492.7V511.8M932.5 488.6V504.2M933.5 493.0V508.0M934.5 492.2V512.6M935.5 489.9V510.4M936.5 495.8V516.7M937.5 490.7V515.3M938.5 492.6V510.3M939.5 492.2V513.8M940.5 492.1V507.1M941.5 496.1V512.4M942.5 493.6V514.8M943.5 492.5V514.0M944.5 492.7V510.7M945.5 490.7V512.2M946.5 488.5V512.4M947.5 490.9V512.1M948.5 495.1V509.9M949.5 486.3V516.3M950.5 492.3V514.7M951.5 488.6V514.6M952.5 485.0V510.4M953.5 489.1V509.5M954.5 492.7V515.4M955.5 490.6V505.1M956.5 490.3V515.5M957.5 490.5V506.7M958.5 495.4V512.6M959.5 489.8V508.9M960.5 492.7V521.5M961.5 489.5V513.0" stroke="#1040e0" stroke-width="1.3" fill="none"/></svg>
<div class="win" style="left:0px;top:30px;width:907px;height:416px;"></div>
<div style="left:4px;top:34px;width:899px;height:18px;background:linear-gradient(90deg,#0a246a,#a6caf0)"></div>
<svg style="left:7px;top:35px" width="16" height="16" viewBox="0 0 16 16"><path d="M2.5 5.5 L13.5 5.5 L11 15 L5 15 Z" fill="#d8e0f0" fill-opacity=".35" stroke="#808080" stroke-width=".9"/><path d="M4 2 L6.5 14" stroke="#40b040" stroke-width="1.6"/><path d="M8 1.5 L8 14" stroke="#e0c020" stroke-width="1.6"/><path d="M11.5 2.5 L9.5 14" stroke="#e03030" stroke-width="1.6"/><path d="M6 3 L7.5 14" stroke="#f08030" stroke-width="1.2"/><circle cx="4" cy="2.5" r="1.3" fill="#705040"/></svg>
<div class="t" style="left:24px;top:37px;color:#fff;font-weight:bold"><span class="jk">無</span><span class="jk">題</span>&nbsp;&nbsp;-&nbsp;&nbsp;<span class="jn">ペ</span><span class="jn">イ</span><span class="jn">ン</span><span class="jn">ト</span></div>
<div class="btn" style="left:851px;top:36px;width:16px;height:14px;"></div>
<div class="btn" style="left:867px;top:36px;width:16px;height:14px;"></div>
<div class="btn" style="left:885px;top:36px;width:16px;height:14px;"></div>
<div style="left:855px;top:45px;width:6px;height:2px;background:#000"></div>
<div style="left:871px;top:38px;width:9px;height:9px;border:1px solid #000;border-top-width:2px"></div>
<svg style="left:889px;top:39px" width="8" height="7"><path d="M0.5 0.5 L7.5 6.5 M7.5 0.5 L0.5 6.5" stroke="#000" stroke-width="1.6"/></svg>
<div class="thin" style="left:67px;top:53px;width:53px;height:19px;"></div>
<div class="t" style="left:10px;top:56px;"><span class="jn">フ</span><span class="js">ァ</span><span class="jn">イ</span><span class="jn">ル</span>(<span class="u">F</span>)</div>
<div class="t" style="left:74px;top:56px;"><span class="jk">編</span><span class="jk">集</span>(<span class="u">E</span>)</div>
<div class="t" style="left:126px;top:56px;"><span class="jk">表</span><span class="jk">示</span>(<span class="u">V</span>)</div>
<div class="t" style="left:180px;top:56px;"><span class="jk">変</span><span class="jk">形</span>(<span class="u">I</span>)</div>
<div class="t" style="left:229px;top:56px;"><span class="jk">色</span>(<span class="u">C</span>)</div>
<div class="t" style="left:272px;top:56px;"><span class="jn">ヘ</span><span class="jn">ル</span><span class="jn">プ</span>(<span class="u">H</span>)</div>
<div style="left:4px;top:72px;width:57px;height:298px;background:#d4d0c8;box-shadow:inset 0 1px #808080,inset 0 2px #fff,inset 0 -1px #606060"></div>
<div class="sunk" style="left:61px;top:72px;width:842px;height:298px;background:#808080"></div>
<div style="left:65px;top:76px;width:512px;height:293px;background:#fff"></div>
<div style="left:577px;top:74px;width:3px;height:3px;background:#fff;box-shadow:-1px -1px #0a246a"></div>
<div style="left:577px;top:226px;width:3px;height:3px;background:#fff;box-shadow:-1px -1px #0a246a"></div>
<div style="left:320px;top:74px;width:3px;height:3px;background:#fff;box-shadow:-1px -1px #0a246a"></div>
<div style="left:62px;top:226px;width:3px;height:3px;background:#fff;box-shadow:-1px -1px #0a246a"></div>
<div style="left:62px;top:74px;width:3px;height:3px;background:#fff;box-shadow:-1px -1px #0a246a"></div>
<div class="dith" style="left:885px;top:73px;width:16px;height:296px;"></div>
<div class="btn" style="left:885px;top:73px;width:16px;height:16px;"></div>
<svg style="left:889px;top:79px" width="8" height="5"><path d="M0 4 L3.5 0 L7 4 Z" fill="#000"/></svg>
<div class="btn" style="left:885px;top:89px;width:16px;height:255px;"></div>
<div class="btn" style="left:885px;top:353px;width:16px;height:16px;"></div>
<svg style="left:889px;top:359px" width="8" height="5"><path d="M0 0 L7 0 L3.5 4 Z" fill="#000"/></svg>
<div class="btn" style="left:7px;top:77px;width:25px;height:25px;"></div>
<svg style="left:7px;top:77px" width="25" height="25" viewBox="0 0 25 25"><path d="M8.5 5.5 L12.5 10 L17.5 5.5 L15.5 11 L20.5 15 L13.5 14 L9 20 L8.5 15 L4 14.5 L9 10.5 Z" fill="none" stroke="#000" stroke-width="1.1" stroke-dasharray="2 1.5"/></svg>
<div class="btn" style="left:32px;top:77px;width:25px;height:25px;"></div>
<svg style="left:32px;top:77px" width="25" height="25" viewBox="0 0 25 25"><rect x="4.5" y="6.5" width="14" height="10" fill="none" stroke="#000" stroke-width="1.1" stroke-dasharray="2 1.2"/></svg>
<div class="btn" style="left:7px;top:102px;width:25px;height:25px;"></div>
<svg style="left:7px;top:102px" width="25" height="25" viewBox="0 0 25 25"><path d="M4.5 12.5 L11.5 6.5 L18.5 6.5 L11.5 12.5 Z" fill="#f0f070" stroke="#000"/><path d="M11.5 12.5 L18.5 6.5 L18.5 9.5 L11.5 15.5 Z" fill="#c8c840" stroke="#000"/><path d="M4.5 12.5 h7 v3 h-7 Z" fill="#fff" stroke="#000"/></svg>
<div class="btn" style="left:32px;top:102px;width:25px;height:25px;"></div>
<svg style="left:32px;top:102px" width="25" height="25" viewBox="0 0 25 25"><path d="M10 8 L15 4 L22 11 L17 16 Z" fill="#10a0a0" stroke="#000"/><path d="M12 7 L15 5 L18 8 L15 10 Z" fill="#fff"/><path d="M14 13 L19 8.5" stroke="#000" stroke-width="1.5"/><path d="M10 8 Q5 8 4.5 12 L5 17 L7 14 L7 10 Z" fill="#000"/></svg>
<div class="btn" style="left:7px;top:127px;width:25px;height:25px;"></div>
<svg style="left:7px;top:127px" width="25" height="25" viewBox="0 0 25 25"><path d="M15 4 Q18 3 20 5 Q21 8 19 10 L17 11 L13 7 Z" fill="#000"/><path d="M13.5 8.5 L6.5 16 L6 18 L8 17.5 L15.5 10.5 Z" fill="#fff" stroke="#000"/><ellipse cx="8.5" cy="19" rx="4.5" ry="1.6" fill="#20c0c0"/></svg>
<div class="btn" style="left:32px;top:127px;width:25px;height:25px;"></div>
<svg style="left:32px;top:127px" width="25" height="25" viewBox="0 0 25 25"><circle cx="9.5" cy="10" r="5" fill="#d4d0c8" stroke="#000" stroke-width="1.3"/><path d="M13 14 L18 18.5" stroke="#000" stroke-width="4"/><path d="M13.3 14.3 L17.7 18.2" stroke="#2020c0" stroke-width="2.2"/></svg>
<div class="pressed dith" style="left:7px;top:152px;width:25px;height:25px;"></div>
<svg style="left:7px;top:152px" width="25" height="25" viewBox="0 0 25 25"><path d="M15.5 6 L18.5 9 L11 17 L9 19.5 L8.5 19.5 L9 16.5 Z" fill="#f0e060" stroke="#000"/><path d="M15.5 6 L17 4.5 Q19.5 5 20 7 L18.5 9 Z" fill="#e07070" stroke="#000" stroke-width=".8"/><path d="M9 16.5 L11 17 L9 19.5 Z" fill="#000"/></svg>
<div class="btn" style="left:32px;top:152px;width:25px;height:25px;"></div>
<svg style="left:32px;top:152px" width="25" height="25" viewBox="0 0 25 25"><rect x="10.5" y="4" width="4" height="9" rx="1.5" fill="#b0c040" stroke="#000" stroke-width=".8"/><rect x="9" y="12.5" width="7" height="2.5" fill="#000"/><path d="M8.5 15 h8 v5.5 h-8 z" fill="#fff" stroke="#000"/><path d="M10.5 17 v3 M12.5 17 v3 M14.5 17 v3" stroke="#000"/></svg>
<div class="btn" style="left:7px;top:177px;width:25px;height:25px;"></div>
<svg style="left:7px;top:177px" width="25" height="25" viewBox="0 0 25 25"><defs><pattern id="chk" width="2" height="2" patternUnits="userSpaceOnUse"><rect width="1" height="1" fill="#000080"/><rect x="1" y="1" width="1" height="1" fill="#000080"/></pattern></defs><path d="M4 6 Q7 3 12 4 L13 6 Q9 7 8 10 L6 14 L5 17 L4 13 Z" fill="url(#chk)"/><path d="M12 8 L15.5 5 L21 10.5 L17.5 14 Z" fill="#1010c0" stroke="#000"/><path d="M11.5 7.5 L14 5.5 L15.5 8 L13 10 Z" fill="#fff" stroke="#000" stroke-width=".6"/></svg>
<div class="btn" style="left:32px;top:177px;width:25px;height:25px;"></div>
<svg style="left:32px;top:177px" width="25" height="25" viewBox="0 0 25 25"><text x="4" y="17" font-family="Liberation Serif" font-weight="bold" font-size="16" fill="#000" textLength="14" lengthAdjust="spacingAndGlyphs">A</text></svg>
<div class="btn" style="left:7px;top:202px;width:25px;height:25px;"></div>
<svg style="left:7px;top:202px" width="25" height="25" viewBox="0 0 25 25"><path d="M5.5 5.5 L18.5 18" stroke="#000" stroke-width="1.3"/></svg>
<div class="btn" style="left:32px;top:202px;width:25px;height:25px;"></div>
<svg style="left:32px;top:202px" width="25" height="25" viewBox="0 0 25 25"><path d="M10 4.5 L13 8 L9 13 L12 19" stroke="#000" stroke-width="1.3" fill="none" stroke-linejoin="round"/></svg>
<div class="btn" style="left:7px;top:227px;width:25px;height:25px;"></div>
<svg style="left:7px;top:227px" width="25" height="25" viewBox="0 0 25 25"><rect x="4.5" y="6.5" width="14" height="10" fill="#c8c8c8" stroke="#000" stroke-width="1.2"/></svg>
<div class="btn" style="left:32px;top:227px;width:25px;height:25px;"></div>
<svg style="left:32px;top:227px" width="25" height="25" viewBox="0 0 25 25"><path d="M8 5.5 L17 5.5 L11.5 12.5 L18 12.5 L18 17 L4.5 17 Z" fill="#c8c8c8" stroke="#000" stroke-width="1.2" stroke-linejoin="round"/></svg>
<div class="btn" style="left:7px;top:252px;width:25px;height:25px;"></div>
<svg style="left:7px;top:252px" width="25" height="25" viewBox="0 0 25 25"><ellipse cx="11.3" cy="11.5" rx="7" ry="4.5" fill="#c8c8c8" stroke="#000" stroke-width="1.2"/></svg>
<div class="btn" style="left:32px;top:252px;width:25px;height:25px;"></div>
<svg style="left:32px;top:252px" width="25" height="25" viewBox="0 0 25 25"><rect x="4.5" y="6.5" width="14" height="10" rx="3.5" fill="#c8c8c8" stroke="#000" stroke-width="1.2"/></svg>
<div class="thin" style="left:11px;top:281px;width:43px;height:67px;background:#d4d0c8"></div>
<div style="left:4px;top:370px;width:899px;height:49px;background:#d4d0c8;box-shadow:inset 0 1px #fff"></div>
<div class="dith" style="left:5px;top:379px;width:30px;height:30px;box-shadow:inset 1px 1px #808080,inset 2px 2px #000,inset -1px -1px #fff"></div>
<div style="left:17px;top:391px;width:13px;height:13px;background:#fff;box-shadow:inset -1px -1px #808080,inset 1px 1px #fff"></div>
<div style="left:10px;top:384px;width:12px;height:12px;background:#000;box-shadow:0 0 0 1px #808080"></div>
<div style="left:36px;top:379px;width:15px;height:15px;background:#000000;box-shadow:inset 1px 1px #808080,inset -1px -1px #fff,inset 2px 2px #000"></div>
<div style="left:36px;top:394px;width:15px;height:15px;background:#ffffff;box-shadow:inset 1px 1px #808080,inset -1px -1px #fff,inset 2px 2px #000"></div>
<div style="left:52px;top:379px;width:15px;height:15px;background:#808080;box-shadow:inset 1px 1px #808080,inset -1px -1px #fff,inset 2px 2px #000"></div>
<div style="left:52px;top:394px;width:15px;height:15px;background:#c0c0c0;box-shadow:inset 1px 1px #808080,inset -1px -1px #fff,inset 2px 2px #000"></div>
<div style="left:68px;top:379px;width:15px;height:15px;background:#800000;box-shadow:inset 1px 1px #808080,inset -1px -1px #fff,inset 2px 2px #000"></div>
<div style="left:68px;top:394px;width:15px;height:15px;background:#ff0000;box-shadow:inset 1px 1px #808080,inset -1px -1px #fff,inset 2px 2px #000"></div>
<div style="left:84px;top:379px;width:15px;height:15px;background:#808000;box-shadow:inset 1px 1px #808080,inset -1px -1px #fff,inset 2px 2px #000"></div>
<div style="left:84px;top:394px;width:15px;height:15px;background:#ffff00;box-shadow:inset 1px 1px #808080,inset -1px -1px #fff,inset 2px 2px #000"></div>
<div style="left:100px;top:379px;width:15px;height:15px;background:#008000;box-shadow:inset 1px 1px #808080,inset -1px -1px #fff,inset 2px 2px #000"></div>
<div style="left:100px;top:394px;width:15px;height:15px;background:#00ff00;box-shadow:inset 1px 1px #808080,inset -1px -1px #fff,inset 2px 2px #000"></div>
<div style="left:116px;top:379px;width:15px;height:15px;background:#008080;box-shadow:inset 1px 1px #808080,inset -1px -1px #fff,inset 2px 2px #000"></div>
<div style="left:116px;top:394px;width:15px;height:15px;background:#00ffff;box-shadow:inset 1px 1px #808080,inset -1px -1px #fff,inset 2px 2px #000"></div>
<div style="left:132px;top:379px;width:15px;height:15px;background:#000080;box-shadow:inset 1px 1px #808080,inset -1px -1px #fff,inset 2px 2px #000"></div>
<div style="left:132px;top:394px;width:15px;height:15px;background:#0000ff;box-shadow:inset 1px 1px #808080,inset -1px -1px #fff,inset 2px 2px #000"></div>
<div style="left:148px;top:379px;width:15px;height:15px;background:#800080;box-shadow:inset 1px 1px #808080,inset -1px -1px #fff,inset 2px 2px #000"></div>
<div style="left:148px;top:394px;width:15px;height:15px;background:#ff00ff;box-shadow:inset 1px 1px #808080,inset -1px -1px #fff,inset 2px 2px #000"></div>
<div style="left:164px;top:379px;width:15px;height:15px;background:#808040;box-shadow:inset 1px 1px #808080,inset -1px -1px #fff,inset 2px 2px #000"></div>
<div style="left:164px;top:394px;width:15px;height:15px;background:#ffff80;box-shadow:inset 1px 1px #808080,inset -1px -1px #fff,inset 2px 2px #000"></div>
<div style="left:180px;top:379px;width:15px;height:15px;background:#004040;box-shadow:inset 1px 1px #808080,inset -1px -1px #fff,inset 2px 2px #000"></div>
<div style="left:180px;top:394px;width:15px;height:15px;background:#00ff80;box-shadow:inset 1px 1px #808080,inset -1px -1px #fff,inset 2px 2px #000"></div>
<div style="left:196px;top:379px;width:15px;height:15px;background:#0080ff;box-shadow:inset 1px 1px #808080,inset -1px -1px #fff,inset 2px 2px #000"></div>
<div style="left:196px;top:394px;width:15px;height:15px;background:#80ffff;box-shadow:inset 1px 1px #808080,inset -1px -1px #fff,inset 2px 2px #000"></div>
<div style="left:212px;top:379px;width:15px;height:15px;background:#004080;box-shadow:inset 1px 1px #808080,inset -1px -1px #fff,inset 2px 2px #000"></div>
<div style="left:212px;top:394px;width:15px;height:15px;background:#8080ff;box-shadow:inset 1px 1px #808080,inset -1px -1px #fff,inset 2px 2px #000"></div>
<div style="left:228px;top:379px;width:15px;height:15px;background:#8000ff;box-shadow:inset 1px 1px #808080,inset -1px -1px #fff,inset 2px 2px #000"></div>
<div style="left:228px;top:394px;width:15px;height:15px;background:#ff0080;box-shadow:inset 1px 1px #808080,inset -1px -1px #fff,inset 2px 2px #000"></div>
<div style="left:244px;top:379px;width:15px;height:15px;background:#804000;box-shadow:inset 1px 1px #808080,inset -1px -1px #fff,inset 2px 2px #000"></div>
<div style="left:244px;top:394px;width:15px;height:15px;background:#ff8040;box-shadow:inset 1px 1px #808080,inset -1px -1px #fff,inset 2px 2px #000"></div>
<div style="left:4px;top:418px;width:899px;height:1px;background:#808080"></div>
<div style="left:4px;top:419px;width:899px;height:1px;background:#fff"></div>
<div class="thin" style="left:4px;top:422px;width:643px;height:21px;"></div>
<div class="thin" style="left:649px;top:422px;width:117px;height:21px;"></div>
<div class="thin" style="left:768px;top:422px;width:118px;height:21px;"></div>
<div class="t" style="left:6px;top:426px;"><span class="jn">ク</span><span class="jn">リ</span><span class="js">ッ</span><span class="jn">プ</span><span class="jn">ボ</span><span class="jn">ー</span><span class="jn">ド</span><span class="jn">の</span><span class="jk">内</span><span class="jk">容</span><span class="jn">を</span><span class="jk">挿</span><span class="jk">入</span><span class="jn">し</span><span class="jn">ま</span><span class="jn">す</span><span class="jp">。</span></div>
<svg style="left:889px;top:430px" width="12" height="12"><path d="M11 1 L1 11 M11 5 L5 11 M11 9 L9 11" stroke="#fff" stroke-width="1"/><path d="M11 2 L2 11 M11 6 L6 11 M11 10 L10 11" stroke="#808080" stroke-width="1"/></svg>
<div style="left:68px;top:72px;width:195px;height:167px;background:#d4d0c8;box-shadow:inset -1px -1px #404040,inset 1px 1px #d4d0c8,inset -2px -2px #808080,inset 2px 2px #fff"></div>
<div class="t" style="left:85px;top:77px;color:#808080;text-shadow:1px 1px #fff;"><span class="jk">元</span><span class="jn">に</span><span class="jk">戻</span><span class="jn">す</span>(<span class="u">U</span>)</div>
<div class="t" style="left:208px;top:77px;color:#808080;text-shadow:1px 1px #fff;">Ctrl+Z</div>
<div class="t" style="left:85px;top:93px;color:#808080;text-shadow:1px 1px #fff;"><span class="jk">繰</span><span class="jn">り</span><span class="jk">返</span><span class="jn">し</span>(<span class="u">R</span>)</div>
<div class="t" style="left:208px;top:93px;color:#808080;text-shadow:1px 1px #fff;">Ctrl+Y</div>
<div style="left:70px;top:110px;width:191px;height:1px;background:#808080"></div>
<div style="left:70px;top:111px;width:191px;height:1px;background:#fff"></div>
<div class="t" style="left:85px;top:117px;color:#808080;text-shadow:1px 1px #fff;"><span class="jk">切</span><span class="jn">り</span><span class="jk">取</span><span class="jn">り</span>(<span class="u">T</span>)</div>
<div class="t" style="left:208px;top:117px;color:#808080;text-shadow:1px 1px #fff;">Ctrl+X</div>
<div class="t" style="left:85px;top:133px;color:#808080;text-shadow:1px 1px #fff;"><span class="jn">コ</span><span class="jn">ピ</span><span class="jn">ー</span>(<span class="u">C</span>)</div>
<div class="t" style="left:208px;top:133px;color:#808080;text-shadow:1px 1px #fff;">Ctrl+C</div>
<div style="left:70px;top:147px;width:191px;height:16px;background:#0a246a"></div>
<div class="t" style="left:85px;top:149px;color:#fff;"><span class="jk">貼</span><span class="jn">り</span><span class="jk">付</span><span class="jn">け</span>(<span class="u">P</span>)</div>
<div class="t" style="left:208px;top:149px;color:#fff;">Ctrl+V</div>
<div class="t" style="left:85px;top:165px;color:#808080;text-shadow:1px 1px #fff;"><span class="jk">選</span><span class="jk">択</span><span class="jk">範</span><span class="jk">囲</span><span class="jn">の</span><span class="jn">ク</span><span class="jn">リ</span><span class="jn">ア</span>(<span class="u">L</span>)</div>
<div class="t" style="left:208px;top:165px;color:#808080;text-shadow:1px 1px #fff;">Del</div>
<div class="t" style="left:85px;top:181px;color:#000;"><span class="jn">す</span><span class="jn">べ</span><span class="jn">て</span><span class="jk">選</span><span class="jk">択</span>(<span class="u">A</span>)</div>
<div class="t" style="left:208px;top:181px;color:#000;">Ctrl+A</div>
<div style="left:70px;top:198px;width:191px;height:1px;background:#808080"></div>
<div style="left:70px;top:199px;width:191px;height:1px;background:#fff"></div>
<div class="t" style="left:85px;top:205px;color:#808080;text-shadow:1px 1px #fff;"><span class="jn">フ</span><span class="js">ァ</span><span class="jn">イ</span><span class="jn">ル</span><span class="jn">へ</span><span class="jn">コ</span><span class="jn">ピ</span><span class="jn">ー</span>(<span class="u">O</span>)...</div>
<div class="t" style="left:85px;top:221px;color:#000;"><span class="jn">フ</span><span class="js">ァ</span><span class="jn">イ</span><span class="jn">ル</span><span class="jn">か</span><span class="jn">ら</span><span class="jk">貼</span><span class="jn">り</span><span class="jk">付</span><span class="jn">け</span>(<span class="u">F</span>)...</div>
<div style="left:0px;top:0px;width:1024px;height:29px;background:#d4d0c8"></div>
<div style="left:0px;top:28px;width:1024px;height:1px;background:#808080"></div>
<div style="left:0px;top:29px;width:1024px;height:1px;background:#404040"></div>
<div class="btn" style="left:2px;top:2px;width:62px;height:22px;"></div>
<svg style="left:4px;top:4px" width="18" height="17" viewBox="0 0 18 17">
<path d="M2 2 Q5 0 8 2 L7 8 Q4 6 1 8 Z" fill="#f05020"/>
<path d="M9 2 Q12 4 16 2 L15 8 Q12 10 8 8 Z" fill="#50c030"/>
<path d="M1 9 Q4 7 7 9 L6 15 Q3 13 0 15 Z" fill="#3070e0"/>
<path d="M8 9 Q11 11 15 9 L14 15 Q11 17 7 15 Z" fill="#f0c020"/>
</svg>
<div class="t" style="left:22px;top:7px;font-weight:bold"><span class="jn">ス</span><span class="jn">タ</span><span class="jn">ー</span><span class="jn">ト</span></div>
<div style="left:71px;top:4px;width:1px;height:20px;background:#fff"></div>
<div style="left:72px;top:4px;width:1px;height:20px;background:#808080"></div>
<div class="btn" style="left:78px;top:2px;width:130px;height:22px;"></div>
<svg style="left:82px;top:5px" width="17" height="16" viewBox="0 0 17 16"><path d="M1 3 h5 l2 2 h7 v9 h-14 z" fill="#e8c860" stroke="#806020" stroke-width=".8"/><path d="M3 7 h13 l-2 7 h-13 z" fill="#f8e090" stroke="#806020" stroke-width=".8"/><circle cx="9" cy="9" r="3" fill="#c0e0ff"/></svg>
<div class="t" style="left:101px;top:8px;font-size:11px">a</div>
<div class="btn" style="left:211px;top:2px;width:130px;height:22px;"></div>
<svg style="left:215px;top:5px" width="16" height="16" viewBox="0 0 16 16"><rect x="0" y="0" width="15" height="16" fill="#000"/><path d="M3 1.5 h10 M3 14.5 h10" stroke="#fff" stroke-dasharray="1 1"/><path d="M1.5 2 v12" stroke="#fff" stroke-dasharray="2 1"/><path d="M3 3 L15 8 L3 13 Z" fill="#f0f080"/><path d="M4 8 h5 M6.5 5.5 v5" stroke="#000"/></svg>
<div class="t" style="left:234px;top:8px;font-size:11px">LabVIEW</div>
<div class="btn" style="left:344px;top:2px;width:131px;height:22px;"></div>
<svg style="left:348px;top:5px" width="16" height="16" viewBox="0 0 16 16"><rect x="0" y="0" width="15" height="16" fill="#000"/><path d="M3 1.5 h10 M3 14.5 h10" stroke="#fff" stroke-dasharray="1 1"/><path d="M1.5 2 v12" stroke="#fff" stroke-dasharray="2 1"/><path d="M3 3 L15 8 L3 13 Z" fill="#f0f080"/><path d="M4 8 h5 M6.5 5.5 v5" stroke="#000"/></svg>
<div class="t" style="left:367px;top:8px;font-size:11px">speana018.vi</div>
<div class="btn" style="left:477px;top:2px;width:131px;height:22px;"></div>
<svg style="left:481px;top:5px" width="17" height="16" viewBox="0 0 17 16"><path d="M1 3 h5 l2 2 h7 v9 h-14 z" fill="#e8c860" stroke="#806020" stroke-width=".8"/><path d="M3 7 h13 l-2 7 h-13 z" fill="#f8e090" stroke="#806020" stroke-width=".8"/><circle cx="9" cy="9" r="3" fill="#c0e0ff"/></svg>
<div class="t" style="left:500px;top:8px;font-size:11px">a</div>
<div class="dith" style="left:612px;top:2px;width:131px;height:22px;box-shadow:inset 1px 1px #404040,inset -1px -1px #fff,inset 2px 2px #808080"></div>
<svg style="left:617px;top:5px" width="16" height="16" viewBox="0 0 16 16"><path d="M2.5 5.5 L13.5 5.5 L11 15 L5 15 Z" fill="#d8e0f0" fill-opacity=".35" stroke="#808080" stroke-width=".9"/><path d="M4 2 L6.5 14" stroke="#40b040" stroke-width="1.6"/><path d="M8 1.5 L8 14" stroke="#e0c020" stroke-width="1.6"/><path d="M11.5 2.5 L9.5 14" stroke="#e03030" stroke-width="1.6"/><path d="M6 3 L7.5 14" stroke="#f08030" stroke-width="1.2"/><circle cx="4" cy="2.5" r="1.3" fill="#705040"/></svg>
<div class="t" style="left:634px;top:8px;font-weight:bold"><span class="jk">無</span><span class="jk">題</span>&nbsp;&nbsp;-&nbsp;&nbsp;<span class="jn">ペ</span><span class="jn">イ</span><span class="jn">ン</span><span class="jn">ト</span></div>
<div style="left:752px;top:4px;width:1px;height:20px;background:#fff"></div>
<div style="left:753px;top:4px;width:1px;height:20px;background:#808080"></div>
<svg style="left:762px;top:6px" width="18" height="16"><rect x="1.5" y="4.5" width="15" height="10" rx="1.5" fill="#fff" stroke="#000"/><path d="M4 7.5h10M4 9.5h10M4 11.5h10" stroke="#000" stroke-dasharray="1 1"/><path d="M5 3 q1 -2 2 0 q1 2 2 0 q1 -2 2 0 q1 2 2 0" stroke="#000" fill="none" stroke-width=".8"/></svg>
<svg style="left:791px;top:5px" width="12" height="17"><circle cx="6" cy="2" r="1.2" fill="none" stroke="#000" stroke-width=".8"/><path d="M5 3 L2 16 M7 3 L10 16 M3 11 h6" stroke="#000" fill="none" stroke-width="1.2"/></svg>
<svg style="left:806px;top:5px" width="18" height="18"><path d="M1 8 L11 3 L17 6 L7 11 Z" fill="#f0e0f0" stroke="#605060" stroke-width=".8"/><path d="M1 8 L7 11 L7 17 L1 14 Z" fill="#c090c8" stroke="#605060" stroke-width=".8"/><path d="M7 11 L17 6 L17 12 L7 17 Z" fill="#a070b0" stroke="#605060" stroke-width=".8"/><path d="M8 5 q2 -2 4 0" stroke="#000" fill="none"/></svg>
<div style="left:827px;top:3px;width:1px;height:23px;background:#808080"></div>
<div style="left:828px;top:3px;width:1px;height:23px;background:#fff"></div>
<div class="t" style="left:832px;top:4px;font-size:8px;font-weight:bold;line-height:9px;transform:scaleX(.95);transform-origin:0 0">CAPS</div>
<div class="t" style="left:832px;top:15px;font-size:8px;font-weight:bold;line-height:9px;transform:scaleX(.95);transform-origin:0 0">KANA</div>
<svg style="left:857px;top:4px" width="10" height="20"><rect x="1.5" y="3.5" width="6" height="4" fill="none" stroke="#000"/><rect x="3.5" y="1.5" width="6" height="4" fill="#d4d0c8" stroke="#000"/><path d="M2 16 L8 16 L5 20 Z" fill="#000"/></svg>
<div style="left:872px;top:2px;width:150px;height:24px;box-shadow:inset 1px 1px #808080,inset -1px -1px #fff"></div>
<svg style="left:872px;top:2px" width="115" height="24">
<circle cx="5.5" cy="10" r="1.8" fill="#fff" stroke="#506050" stroke-width=".5"/><path d="M3 19 Q3 13 6 13 Q9 13 9 19 Z" fill="#e0f0e0" stroke="#40a040" stroke-width=".6"/>
<circle cx="13" cy="8" r="2.8" fill="#2090c0" stroke="#104060" stroke-width=".6"/><path d="M7 20 Q7 12 12 12 Q15 12 15 16 L12 20 Z" fill="#30a050"/>
<circle cx="15.5" cy="17" r="3.8" fill="#d02020"/><path d="M13.8 15.3 L17.2 18.7 M17.2 15.3 L13.8 18.7" stroke="#fff" stroke-width="1.2"/>
<circle cx="27" cy="11" r="5.2" fill="#a8a8a8" stroke="#505050" stroke-width="1.4"/><circle cx="26" cy="10" r="2.2" fill="#707070"/><circle cx="22.5" cy="9" r="1.2" fill="#40a0a0"/>
<path d="M39 17.5 L46 6 L55 6 L55 17.5 L51 17.5 L51 13 L49 13 L46 17.5 Z" fill="#d01818" stroke="#800000" stroke-width=".6"/><path d="M44 16 L47.5 10 M49 9 h5 M51.5 9 v7 M54 11 v5" stroke="#fff" stroke-width="1.3"/>
<path d="M58 6 Q60 4 64 5 L66 9 L62 13 L58 11 Z" fill="#40b040" stroke="#207020" stroke-width=".6"/>
<path d="M61 14 L69 10 L72 15 L64 19 Z" fill="#b8b8b8" stroke="#606060" stroke-width=".7"/><path d="M64 15 l4 -2" stroke="#4040a0" stroke-width="1.2" stroke-dasharray="1 1"/>
<rect x="75.5" y="4.5" width="7" height="6" fill="#a0a0a8" stroke="#404040" stroke-width=".6"/><rect x="84.5" y="4.5" width="7" height="6" fill="#a0a0a8" stroke="#404040" stroke-width=".6"/><rect x="79.5" y="14.5" width="7" height="5" fill="#a0a0a8" stroke="#404040" stroke-width=".6"/>
<path d="M83 4 V15" stroke="#000"/><circle cx="83" cy="11.5" r="3" fill="#0010e0"/>
<path d="M93.5 4 Q96 7 96 10 L97 13 L104 13" stroke="#000" stroke-width="1.2" fill="none"/><path d="M97 14 L105 13 L106 18 L99 19 Z" fill="#fff" stroke="#000" stroke-width=".9"/><rect x="104" y="15" width="5" height="4" fill="#e8e040" stroke="#000" stroke-width=".6"/>
</svg>
<div class="t" style="left:991px;top:8px;font-size:11px">8:58</div></body></html>
